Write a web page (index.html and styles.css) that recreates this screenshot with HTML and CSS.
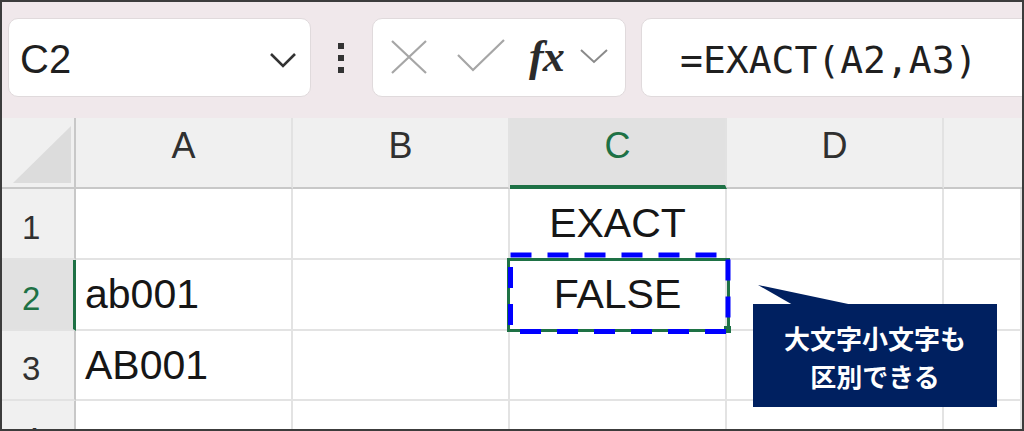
FILE: index.html
```html
<!DOCTYPE html>
<html lang="ja">
<head>
<meta charset="utf-8">
<title>EXACT</title>
<link rel="stylesheet" href="styles.css">
</head>
<body>
<div class="frame">
  <div class="toolbar">
    <div class="namebox">
      <span class="name">C2</span>
      <svg class="chev" width="28" height="16" viewBox="0 0 28 16"><path d="M2 2 L14 14 L26 2" fill="none" stroke="#333" stroke-width="2.6"/></svg>
    </div>
    <div class="dots"><i></i><i></i><i></i></div>
    <div class="fxbox">
      <svg class="ico-x" width="36" height="34" viewBox="0 0 36 34"><path d="M1 1 L35 33 M35 1 L1 33" stroke="#a6a6a6" stroke-width="2.2" fill="none"/></svg>
      <svg class="ico-check" width="48" height="33" viewBox="0 0 48 33"><path d="M1 16 L16 31 L47 1" stroke="#a6a6a6" stroke-width="2.2" fill="none"/></svg>
      <span class="fx">fx</span>
      <svg class="ico-chev" width="28" height="15" viewBox="0 0 28 15"><path d="M1 1 L14 13 L27 1" stroke="#8a8a8a" stroke-width="2" fill="none"/></svg>
    </div>
    <div class="formula">=EXACT(A2,A3)</div>
  </div>
  <div class="sheet">
    <div class="grid">
      <div class="c corner"><span class="tri"></span></div>
      <div class="c colh">A</div>
      <div class="c colh">B</div>
      <div class="c colh sel">C</div>
      <div class="c colh">D</div>
      <div class="c colh last"></div>

      <div class="c rowh">1</div>
      <div class="c"></div>
      <div class="c"></div>
      <div class="c mid">EXACT</div>
      <div class="c"></div>
      <div class="c"></div>

      <div class="c rowh sel">2</div>
      <div class="c">ab001</div>
      <div class="c"></div>
      <div class="c mid">FALSE</div>
      <div class="c"></div>
      <div class="c"></div>

      <div class="c rowh">3</div>
      <div class="c">AB001</div>
      <div class="c"></div>
      <div class="c"></div>
      <div class="c"></div>
      <div class="c"></div>

      <div class="c rowh">4</div>
      <div class="c"></div>
      <div class="c"></div>
      <div class="c"></div>
      <div class="c"></div>
      <div class="c"></div>
    </div>
    <div class="selbox"><span class="handle"></span></div>
    <svg class="marquee" width="230" height="87" viewBox="0 0 230 87"><rect x="5.5" y="5" width="217.5" height="76.5" fill="none" stroke="#0000ff" stroke-width="5" stroke-dasharray="21 16"/></svg>
    <div class="callout">
      <svg class="tail" width="100" height="20" viewBox="0 0 100 20"><polygon points="5,0 40,20 100,20" fill="#002060"/></svg>
      <div class="msg">
        <span class="line">大文字小文字も</span>
        <span class="line">区別できる</span>
      </div>
    </div>
  </div>
</div>
</body>
</html>
```

FILE: styles.css
```css
html, body {
  margin: 0;
  padding: 0;
  background: #ffffff;
}

.frame {
  width: 1024px;
  height: 431px;
  box-sizing: border-box;
  border: 2px solid #3c3c3c;
  overflow: hidden;
  display: flex;
  flex-direction: column;
  font-family: "Liberation Sans", Arial, sans-serif;
}

/* ---------- toolbar ---------- */
.toolbar {
  height: 116px;
  flex: 0 0 116px;
  background: #f0e8eb;
  display: flex;
  align-items: flex-start;
  padding-top: 16px;
  box-sizing: border-box;
}

.namebox {
  margin-left: 6px;
  width: 303px;
  height: 79px;
  box-sizing: border-box;
  background: #ffffff;
  border: 1px solid #e0dadc;
  border-radius: 10px;
  display: flex;
  align-items: center;
  justify-content: space-between;
  padding: 0 13px 0 11px;
}

.name {
  font-size: 40px;
  color: #1f1f1f;
  padding-top: 3px;
}

.chev {
  margin-top: 4px;
}

.dots {
  margin-left: 27px;
  height: 79px;
  display: flex;
  flex-direction: column;
  justify-content: center;
  gap: 6px;
}

.dots i {
  display: block;
  width: 6px;
  height: 6px;
  background: #333333;
}

.fxbox {
  margin-left: 28px;
  width: 254px;
  height: 79px;
  box-sizing: border-box;
  background: #ffffff;
  border: 1px solid #e0dadc;
  border-radius: 10px;
  display: flex;
  align-items: center;
  padding-left: 18px;
}

.ico-x {
  margin-top: -2px;
}

.ico-check {
  margin-left: 30px;
  margin-top: -5px;
}

.fx {
  margin-left: 24px;
  font-family: "Liberation Serif", "DejaVu Serif", serif;
  font-style: italic;
  font-weight: 700;
  font-size: 44px;
  color: #2b2b2b;
  letter-spacing: -1px;
  margin-top: -2px;
}

.ico-chev {
  margin-left: 16px;
  margin-top: -2px;
}

.formula {
  margin-left: 15px;
  flex: 1 0 auto;
  margin-right: -30px;
  height: 79px;
  box-sizing: border-box;
  background: #ffffff;
  border: 1px solid #e0dadc;
  border-radius: 10px;
  display: flex;
  align-items: center;
  padding-left: 38px;
  font-family: "DejaVu Sans Mono", monospace;
  font-size: 38px;
  color: #1f1f1f;
  padding-top: 4px;
}

/* ---------- sheet ---------- */
.sheet {
  position: relative;
  flex: 1 1 auto;
  overflow: hidden;
}

.grid {
  display: grid;
  grid-template-columns: 74px 217px 217px 217px 217px 1fr;
  grid-template-rows: 71px 71px 71px 70px 71px;
}

.c {
  box-sizing: border-box;
  border-right: 2px solid #e3e3e3;
  border-bottom: 2px solid #e3e3e3;
  display: flex;
  align-items: center;
  padding-left: 9px;
  font-size: 41px;
  color: #161616;
  overflow: hidden;
  white-space: nowrap;
}

.c.mid {
  justify-content: center;
  padding-left: 0;
}

.colh {
  background: #f0f0f0;
  border-right: 2px solid #e2e2e2;
  border-bottom: 2px solid #c8c8c8;
  justify-content: center;
  padding-left: 0;
  padding-bottom: 14px;
  font-size: 36px;
  color: #303030;
}

.colh.sel {
  background: #e1e1e1;
  color: #1e7145;
  border-bottom: 4px solid #1e7145;
  padding-bottom: 12px;
}

.colh.last {
  border-right: none;
}

.corner {
  background: #f0f0f0;
  border-right: 2px solid #c8c8c8;
  border-bottom: 2px solid #c8c8c8;
  padding: 0;
  position: relative;
}

.tri {
  position: absolute;
  left: 11px;
  top: 8px;
  width: 58px;
  height: 57px;
  background: #dcdcdc;
  clip-path: polygon(100% 0, 100% 100%, 0 100%);
}

.rowh {
  background: #f0f0f0;
  border-right: 2px solid #c8c8c8;
  border-bottom: 2px solid #e2e2e2;
  padding-left: 20px;
  padding-top: 8px;
  font-size: 33px;
  color: #303030;
}

.rowh.sel {
  background: #e1e1e1;
  color: #1e7145;
  border-right: 3px solid #1e7145;
}

.selbox {
  position: absolute;
  left: 505px;
  top: 140px;
  width: 223px;
  height: 74px;
  box-sizing: border-box;
  border: 3px solid #1e7145;
}

.handle {
  position: absolute;
  right: -4px;
  bottom: -4px;
  width: 7px;
  height: 7px;
  background: #1e7145;
}

.marquee {
  position: absolute;
  left: 503px;
  top: 132px;
}

.callout {
  position: absolute;
  left: 751px;
  top: 186px;
  width: 244px;
  height: 103px;
  background: #002060;
  display: flex;
  align-items: center;
  justify-content: center;
}

.tail {
  position: absolute;
  left: 0;
  top: -19px;
}

.msg {
  display: flex;
  flex-direction: column;
  align-items: center;
  color: #ffffff;
  font-family: "Noto Sans CJK JP", sans-serif;
  font-weight: 700;
  font-size: 26px;
  line-height: 38px;
  padding-top: 2px;
}

.line {
  display: block;
  white-space: nowrap;
}
```
